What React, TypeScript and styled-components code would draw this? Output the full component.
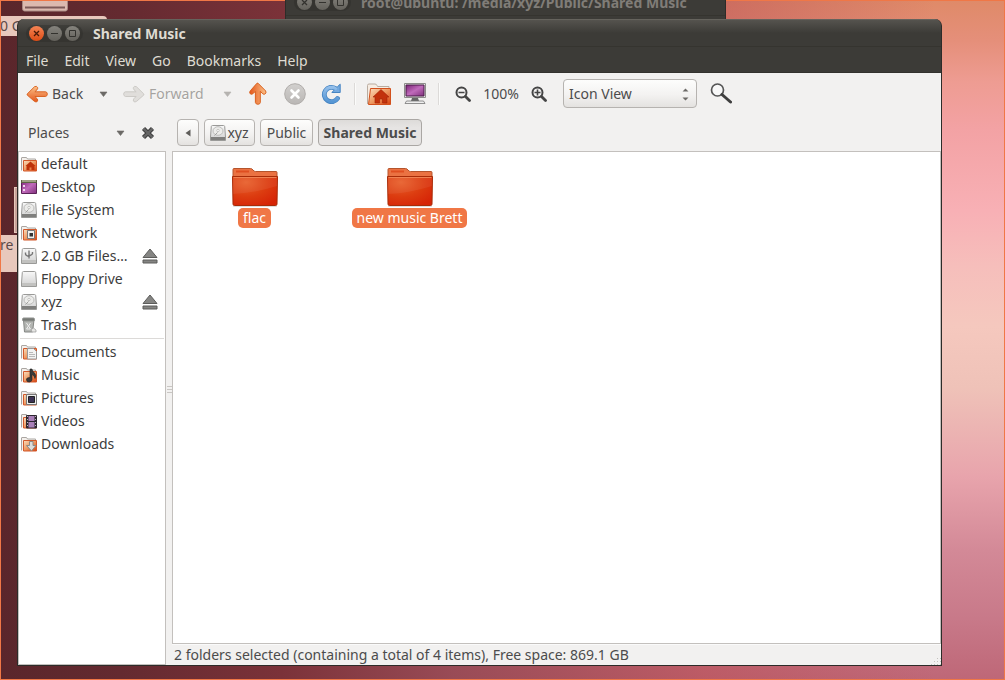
import React from "react";
import styled, { createGlobalStyle, css } from "styled-components";

const GlobalStyle = createGlobalStyle`
  *, *::before, *::after { box-sizing: border-box; }
  html, body, #root { height: 100%; margin: 0; }
  body {
    font-family: "Noto Sans", "Open Sans", sans-serif;
    font-size: 14px;
    line-height: 20px;
    color: #4c4c4c;
    overflow: hidden;
  }
  button, select { font: inherit; color: inherit; margin: 0; }
  svg { display: block; flex: none; }
`;

/* ---------- desktop ---------- */

const Desktop = styled.div`
  position: relative;
  height: 100vh;
  overflow: hidden;
  background:
    linear-gradient(90deg, #5a262b 0%, #642a30 12%, #7b3239 28%, rgba(146, 70, 80, 0.85) 45%, rgba(186, 80, 86, 0.55) 70%, rgba(200, 90, 90, 0) 93%),
    linear-gradient(180deg, #df8a68 0%, #e58f7a 6%, #ee9c92 12%, #f3a2a4 19%, #f8b0b5 31%, #f6bebb 39%, #f5c8be 48%, #efc2b8 57%, #e8a4ac 70%, #d38997 81%, #c87989 91%, #be6777 100%);
`;

const ScreenEdge = styled.div`
  position: absolute;
  inset: 0;
  border: 1px solid #f07746;
  pointer-events: none;
`;

const DesktopDrive = styled.div`
  position: absolute;
  left: 22px;
  top: 0;
`;

const DesktopLabel = styled.div<{ $top: number; $width: number; $height: number }>`
  position: absolute;
  left: 0;
  top: ${(p) => p.$top}px;
  width: ${(p) => p.$width}px;
  height: ${(p) => p.$height}px;
  border-radius: 0 4px 4px 0;
  background: #e8c8bc;
  color: #5c4a48;
  white-space: nowrap;
  overflow: hidden;
`;

const DesktopLauncher = styled.div`
  position: absolute;
  left: 14px;
  top: 187px;
  width: 8px;
  height: 46px;
  background: #c9a49b;
  border: 1px solid #e8c8bc;
`;

/* ---------- window chrome ---------- */

const windowBox = css`
  position: absolute;
  display: flex;
  flex-direction: column;
  border: 1px solid #2d2c29;
  border-top: 0;
  border-radius: 7px 7px 0 0;
  background: #3c3b37;
  overflow: hidden;
`;

const FileWindow = styled.main`
  ${windowBox}
  inset: 19px 63px 14px 17px;
`;

const TerminalWindow = styled.section`
  ${windowBox}
  left: 285px;
  top: -12px;
  width: 441px;
  height: 60px;
`;

const TitleBar = styled.header<{ $dim?: boolean }>`
  display: flex;
  align-items: center;
  flex: none;
  height: 28px;
  padding: 1px 8px 0;
  border-top: 1px solid #65635d;
  border-bottom: 1px solid #35342f;
  background: ${(p) => (p.$dim ? "#3c3b37" : "linear-gradient(#55534e, #3c3b37 50%)")};
  color: ${(p) => (p.$dim ? "#807d78" : "#dfdbd2")};
`;

const Controls = styled.div`
  display: flex;
  gap: 3px;
  padding: 1px 3px;
  border-radius: 9px;
  background: rgba(40, 39, 36, 0.35);
`;

const ControlButton = styled.button<{ $close?: boolean }>`
  display: grid;
  place-items: center;
  width: 15px;
  height: 15px;
  padding: 0;
  border: 0;
  border-radius: 50%;
  background: ${(p) => (p.$close ? "linear-gradient(#f58454, #de4c15)" : "linear-gradient(#85837d, #63615b)")};
  color: ${(p) => (p.$close ? "#4a1a08" : "#33322e")};
`;

const Title = styled.h1`
  margin: 0 0 0 10px;
  font-size: 14px;
  line-height: 20px;
  font-weight: 700;
  white-space: nowrap;
`;

const MenuBar = styled.nav`
  display: flex;
  align-items: center;
  flex: none;
  gap: 16px;
  height: 26px;
  padding: 2px 0 0 8px;
  border-bottom: 1px solid #33322e;
`;

const MenuItem = styled.button`
  padding: 0;
  border: 0;
  background: none;
  color: #dfdbd2;
`;

/* ---------- toolbar ---------- */

const Toolbar = styled.div`
  display: flex;
  align-items: center;
  flex: none;
  height: 41px;
  padding-left: 8px;
  background: #f2f1f0;
`;

const ToolButton = styled.button<{ $width: number; $align?: string }>`
  display: flex;
  align-items: center;
  justify-content: ${(p) => p.$align || "center"};
  flex: none;
  gap: 4px;
  width: ${(p) => p.$width}px;
  height: 30px;
  padding: 0;
  border: 0;
  background: none;
  white-space: nowrap;
  &:disabled { color: #a5a3a0; text-shadow: 0 1px 0 #fff; }
`;

const Gap = styled.span<{ $width: number }>`
  flex: none;
  width: ${(p) => p.$width}px;
`;

const Separator = styled.span`
  flex: none;
  width: 2px;
  height: 22px;
  margin: 0 5px;
  border-left: 1px solid #dcdad8;
  border-right: 1px solid #fbfbfa;
`;

const ZoomLevel = styled.output`
  flex: none;
  width: 52px;
  text-align: center;
`;

const SelectWrap = styled.label`
  position: relative;
  flex: none;
  width: 134px;
  margin: 0 8px 0 12px;
  svg { position: absolute; right: 7px; top: 9px; pointer-events: none; }
`;

const raised = css`
  border: 1px solid #b6b3b0;
  border-radius: 4px;
  background: linear-gradient(#fdfdfc, #f3f2f1 55%, #e4e2e0);
`;

const ViewSelect = styled.select`
  ${raised}
  display: block;
  appearance: none;
  width: 100%;
  height: 29px;
  padding: 0 5px;
`;

/* ---------- body ---------- */

const Body = styled.div`
  display: flex;
  flex: 1;
  min-height: 0;
  background: #f2f1f0;
`;

const Sidebar = styled.aside`
  display: flex;
  flex-direction: column;
  flex: none;
  width: 148px;
`;

const SidebarHeader = styled.div`
  display: flex;
  align-items: center;
  flex: none;
  height: 37px;
  padding: 0 8px 0 10px;
`;

const PlacesButton = styled.button`
  display: flex;
  align-items: center;
  justify-content: space-between;
  width: 97px;
  margin-right: 13px;
  padding: 0;
  border: 0;
  background: none;
`;

const CloseButton = styled.button`
  display: grid;
  place-items: center;
  width: 20px;
  height: 20px;
  padding: 0;
  border: 0;
  background: none;
`;

const PlacesList = styled.ul`
  flex: 1;
  margin: 0;
  padding: 0;
  list-style: none;
  border: 1px solid #c3c0bd;
  background: #fff;
`;

const Place = styled.li`
  display: flex;
  align-items: center;
  height: 23px;
  padding: 0 7px 0 2px;
`;

const PlaceLink = styled.a`
  display: flex;
  align-items: center;
  flex: 1;
  gap: 4px;
  color: #3c3c3c;
  text-decoration: none;
  white-space: nowrap;
`;

const EjectButton = styled.button`
  padding: 0;
  border: 0;
  background: none;
`;

const PlacesDivider = styled.li`
  height: 4px;
  padding: 2px 1px 1px;
  &::before { content: ""; display: block; height: 1px; background: #dcdad8; }
`;

const Handle = styled.div`
  display: grid;
  place-items: center;
  flex: none;
  width: 6px;
`;

const Content = styled.section`
  display: flex;
  flex-direction: column;
  flex: 1;
  min-width: 0;
`;

const PathBar = styled.nav`
  display: flex;
  align-items: center;
  flex: none;
  gap: 5px;
  height: 37px;
  padding-left: 5px;
`;

const PathButton = styled.button<{ $width: number; $active?: boolean }>`
  ${raised}
  display: flex;
  align-items: center;
  justify-content: center;
  flex: none;
  gap: 1px;
  width: ${(p) => p.$width}px;
  height: 27px;
  padding: 0;
  white-space: nowrap;
  ${(p) =>
    p.$active &&
    css`
      font-weight: 700;
      border-color: #aaa7a4;
      background: linear-gradient(#dddbd9, #e6e4e3 30%, #e6e4e3);
    `}
`;

const IconView = styled.div`
  display: grid;
  flex: 1;
  grid-template-columns: repeat(auto-fill, 155px);
  align-content: start;
  min-height: 0;
  padding: 15px 0 0 4px;
  border: 1px solid #c3c0bd;
  background: #fff;
`;

const FolderItem = styled.figure`
  display: flex;
  flex-direction: column;
  align-items: center;
  margin: 0;
`;

const FolderName = styled.figcaption`
  margin-top: 1px;
  padding: 0 5px;
  border-radius: 5px;
  background: #f07746;
  color: #fff;
  white-space: nowrap;
`;

const StatusBar = styled.footer`
  display: flex;
  align-items: center;
  justify-content: space-between;
  flex: none;
  height: 21px;
  padding-left: 2px;
  border-top: 1px solid #fafafa;
  white-space: nowrap;
`;

const Grip = styled.svg`
  align-self: flex-end;
`;

const Definitions = styled.svg`
  position: absolute;
`;

/* ---------- drawings ---------- */

const Gradients = () => (
  <Definitions width="0" height="0" aria-hidden="true">
    <defs>
      <linearGradient id="orange" x1="0" y1="0" x2="0" y2="1">
        <stop offset="0" stopColor="#fbc188" />
        <stop offset="1" stopColor="#e4571b" />
      </linearGradient>
      <linearGradient id="tan" x1="0" y1="0" x2="1" y2="1">
        <stop offset="0" stopColor="#fae0c0" />
        <stop offset="0.5" stopColor="#ee9a62" />
        <stop offset="1" stopColor="#d8410f" />
      </linearGradient>
      <linearGradient id="metal" x1="0" y1="0" x2="0" y2="1">
        <stop offset="0" stopColor="#f8f8f8" />
        <stop offset="1" stopColor="#d0d0d0" />
      </linearGradient>
      <linearGradient id="purple" x1="0" y1="0" x2="1" y2="1">
        <stop offset="0" stopColor="#7c2277" />
        <stop offset="0.5" stopColor="#c06bbb" />
        <stop offset="1" stopColor="#80307c" />
      </linearGradient>
      <linearGradient id="blue" x1="0" y1="0" x2="0" y2="1">
        <stop offset="0" stopColor="#93bee9" />
        <stop offset="1" stopColor="#5696d4" />
      </linearGradient>
      <linearGradient id="grey" x1="0" y1="0" x2="0" y2="1">
        <stop offset="0" stopColor="#d2d0ce" />
        <stop offset="1" stopColor="#b9b6b4" />
      </linearGradient>
      <radialGradient id="folderFront" cx="0.3" cy="0.2" r="0.9">
        <stop offset="0" stopColor="#e8602c" />
        <stop offset="0.55" stopColor="#dc3c10" />
        <stop offset="1" stopColor="#d62406" />
      </radialGradient>
    </defs>
  </Definitions>
);

const CloseGlyph = () => (
  <svg width="7" height="7" viewBox="0 0 7 7" stroke="currentColor" strokeWidth="1.3"><path d="M1 1l5 5M6 1L1 6" /></svg>
);
const MinGlyph = () => (
  <svg width="7" height="7" viewBox="0 0 7 7" stroke="currentColor"><path d="M0 3.5h7" /></svg>
);
const MaxGlyph = () => (
  <svg width="7" height="7" viewBox="0 0 7 7" fill="none" stroke="currentColor"><path d="M.5 .5h6v6h-6z" /></svg>
);

const Triangle = ({ color = "#6b6966" }: { color?: string }) => (
  <svg width="9" height="6" viewBox="0 0 9 6"><path d="M1 1h7L4.500 5.500z" fill={color} stroke={color} strokeWidth=".6" /></svg>
);

const arrowPath = "M1.200 9L9 1.300q2.200-1 3.200 1 .3 1.200-.8 2.400L9.300 6.700H20.500q1.800 .3 1.800 2.400t-1.800 2.500H9.300l2.200 2.200q1.200 1.400 .5 2.700-1.300 1.600-3.200 .2L1.200 10z";

const BackArrow = () => (
  <svg width="22" height="18" viewBox="0 0 23 18"><path d={arrowPath} fill="url(#orange)" stroke="#d9621f" /></svg>
);
const ForwardArrow = () => (
  <svg width="22" height="18" viewBox="0 0 23 18"><path transform="translate(23 0) scale(-1 1)" d={arrowPath} fill="#e0dedb" stroke="#cbc8c4" /></svg>
);
const UpArrow = () => (
  <svg width="18" height="23" viewBox="0 0 18 23">
    <path transform="translate(18 0) rotate(90)" d={arrowPath} fill="url(#orange)" stroke="#d9621f" />
  </svg>
);
const StopIcon = () => (
  <svg width="22" height="22" viewBox="0 0 22 22">
    <circle cx="11" cy="11" r="10.300" fill="url(#grey)" stroke="#b0adaa" />
    <path d="M7.500 7.500l7 7M14.500 7.500l-7 7" stroke="#fff" strokeWidth="2.600" strokeLinecap="round" />
  </svg>
);
const ReloadIcon = () => (
  <svg width="21" height="21" viewBox="0 0 21 21" fill="none">
    <path d="M16.500 15.500A7.200 7.200 0 1 1 14.500 5.500" stroke="#4584c2" strokeWidth="4.800" strokeLinecap="round" />
    <path d="M19.200 1.200v8.300h-8.300l2.600-2.800 3.200-3.200z" fill="#74a9de" stroke="#4584c2" strokeLinejoin="round" />
    <path d="M16.500 15.500A7.200 7.200 0 1 1 14.500 5.500" stroke="url(#blue)" strokeWidth="3.200" strokeLinecap="round" />
  </svg>
);
const HomeFolder = () => (
  <svg width="24" height="22" viewBox="0 0 24 22">
    <path d="M.5 21V2.500q0-1.500 1.500-1.500h6q1.500 0 2 1.500l.5 1h11.500V19" fill="#f6ece2" stroke="#b9aca0" />
    <path d="M3.500 5.500h20v16H1.500z" fill="url(#tan)" stroke="#d2501c" />
    <path d="M14 6.500l8 7.500h-2v6h-4.500v-4h-3v4H8v-6H6z" fill="#c2320c" stroke="#a32406" strokeWidth=".6" />
  </svg>
);
const ComputerIcon = () => (
  <svg width="22" height="23" viewBox="0 0 22 23">
    <path d="M.5 1.500h21v14H.5z" fill="#e4e4e2" stroke="#8d8d8a" />
    <path d="M2 3h18v11H2z" fill="url(#purple)" stroke="#4b1a48" />
    <path d="M8 16h6l1 3H7z" fill="#666" />
    <path d="M2.500 19h17l1.500 2.500H1z" fill="#eee" stroke="#777" strokeWidth=".8" />
  </svg>
);
const ZoomIcon = ({ plus }: { plus?: boolean }) => (
  <svg width="16" height="16" viewBox="0 0 16 16" fill="none" stroke="#454545">
    <circle cx="6.500" cy="6.500" r="5" strokeWidth="2" />
    <path d="M10.500 10.500l4 4" strokeWidth="2.800" strokeLinecap="round" />
    <path d={plus ? "M3.500 6.500h6M6.500 3.500v6" : "M3.500 6.500h6"} strokeWidth="1.600" />
  </svg>
);
const SearchIcon = () => (
  <svg width="22" height="21" viewBox="0 0 22 21" fill="none">
    <circle cx="7.500" cy="7" r="6" fill="#f8f8f8" stroke="#555" strokeWidth="1.700" />
    <path d="M12 11.500l8.500 7.500" stroke="#3e3e3e" strokeWidth="3" strokeLinecap="round" />
  </svg>
);
const Steppers = () => (
  <svg width="9" height="13" viewBox="0 0 9 13" fill="#6b6966"><path d="M1.500 3.500h6L4.500 .5zM1.500 9.500h6l-3 3z" /></svg>
);
const EjectIcon = () => (
  <svg width="16" height="16" viewBox="0 0 16 16" fill="#858583" stroke="#5d5d5b">
    <path d="M8 1L15 9.500H1zM1 12h14v3H1z" />
  </svg>
);
const CrossIcon = () => (
  <svg width="14" height="14" viewBox="0 0 14 14">
    <path d="M2.500 2.500l9 9M11.500 2.500l-9 9" stroke="#3f3f3f" strokeWidth="4.400" />
    <path d="M2.500 2.500l9 9M11.500 2.500l-9 9" stroke="#666" strokeWidth="2.400" />
  </svg>
);

const FolderIcon = () => (
  <svg width="48" height="40" viewBox="0 0 48 40">
    <path d="M3 38.500h42l1 1H2z" fill="#bbb" />
    <path d="M2 10V2.500q0-1 1-1h16.500q1.500 0 2.500 1.500 1 1.500 2.500 1.500H45q1 0 1 1V10z" fill="#ea7242" stroke="#b5542c" />
    <path d="M5 3.500h13v2H5z" fill="#df4e20" />
    <path d="M1.500 9.500h45L46 37q0 1.500-1.500 1.500h-41Q2 38.500 2 37z" fill="url(#folderFront)" stroke="#a82c08" />
    <path d="M2.500 10.500h43" stroke="#ee7a48" />
    <path d="M2 10h44v9Q24 26 2 27z" fill="#fff" opacity=".06" />
  </svg>
);

type IconKind =
  | "home" | "desktop" | "disk" | "network" | "usb" | "drive" | "trash"
  | "documents" | "music" | "pictures" | "videos" | "downloads";

const overlays: Partial<Record<IconKind, React.ReactNode>> = {
  home: <path d="M9.500 5.500l5 4.500h-1v4h-3v-2.500h-2V14h-3v-4h-1z" fill="#bd3109" />,
  network: (
    <>
      <path d="M6.500 5.500h7v8h-7z" fill="#f0f0ee" stroke="#777" />
      <path d="M8.500 8h3.500v3.500H8.500z" fill="#333" />
    </>
  ),
  documents: (
    <>
      <path d="M6.500 4.500h6l3 3v7.500h-9z" fill="#f3f3f2" stroke="#999" />
      <path d="M8 8.500h4M8 10.500h6M8 12.500h6" stroke="#aaa" strokeWidth=".8" />
    </>
  ),
  music: (
    <path d="M9 2l2 0q0 2.500 3 4.500 1.500 2 0 5-.5-3-3-4V12.500q0 2-2.500 2.500T5.500 13 9 10.500z" fill="#3a3a3a" stroke="#222" strokeWidth=".6" />
  ),
  pictures: (
    <>
      <path d="M5.500 4.500h10v10h-10z" fill="#eee" stroke="#777" />
      <path d="M7.500 6.500h6v6h-6z" fill="#3d3354" stroke="#222" />
    </>
  ),
  videos: (
    <>
      <path d="M5.500 2.500h10v12.500h-10z" fill="#a97fb8" stroke="#2d2630" />
      <path d="M6.500 3v12M14.500 3v12" stroke="#2d2630" strokeWidth="2" />
      <path d="M6.500 3v12M14.500 3v12" stroke="#bbb" strokeDasharray="1 2" />
      <path d="M7 8.500h7" stroke="#2d2630" />
    </>
  ),
  downloads: <path d="M8.500 5.500h3.500v4h3l-4.500 5.500L5.500 9.500h3z" fill="#dcdcda" stroke="#8a8a88" />,
};

const PlaceIcon = ({ kind }: { kind: IconKind }) => {
  let art: React.ReactNode;
  if (kind === "desktop") {
    art = (
      <>
        <path d="M.5 1.500h15v13H.5z" fill="url(#purple)" stroke="#5c2358" />
        <path d="M0 1h16v3H0z" fill="#5e6345" />
        <path d="M1 2h14" stroke="#dfe0c4" />
        <path d="M2 6h2v2H2zM2 10h2v2H2z" fill="#f0d8ee" />
      </>
    );
  } else if (kind === "disk" || kind === "usb" || kind === "drive") {
    art = (
      <>
        <path d="M2.500 .5h11q1 0 1.200 1l.8 10.500v3.500H.5V12l.8-10.500q.2-1 1.200-1z" fill="url(#metal)" stroke="#9a9a98" />
        <path d="M1 12h14v3H1z" fill={kind === "disk" ? "#7f7f7d" : "#c2c2c0"} />
        {kind === "disk" && (
          <>
            <ellipse cx="8" cy="6" rx="5" ry="4.300" fill="#ececea" stroke="#bcbcba" />
            <circle cx="8" cy="5.500" r="1.200" fill="#fff" stroke="#b0b0ae" strokeWidth=".7" />
            <path d="M4.500 10.500l3-3" stroke="#a0a09e" />
          </>
        )}
        {kind === "usb" && (
          <path d="M8 2.500v8M4.500 4.500v1.500q0 1.500 3.500 2.500M11.500 4v1.500q0 1-3.500 2.500" fill="none" stroke="#777" strokeWidth="1.400" />
        )}
      </>
    );
  } else if (kind === "trash") {
    art = (
      <>
        <path d="M2.500 3l1 12h8l1.500-12z" fill="#b4b6b3" stroke="#848683" />
        <path d="M2.500 1h10q1 0 1 1.500t-1 1.500h-10q-1 0-1-1.500t1-1.500z" fill="#777a76" stroke="#8f918e" />
        <path d="M5.500 6l2 3 2-3M5.500 12h4l-2-3z" fill="none" stroke="#eee" />
        <path d="M10 12.500l2.500-1.500 2.500 2v2h-4z" fill="#e6e6e4" stroke="#999" strokeWidth=".7" />
      </>
    );
  } else {
    art = (
      <>
        <path d="M.5 14.500V2q0-.5 .5-.5h4.500l1 1.500h8V5" fill="#f4f0ec" stroke="#aaa6a2" />
        <path d="M2.500 4.500h13v10.500h-13z" fill="url(#tan)" stroke="#d2582a" />
        {overlays[kind]}
      </>
    );
  }
  return <svg width="16" height="16" viewBox="0 0 16 16" aria-hidden="true">{art}</svg>;
};

/* ---------- data ---------- */

interface PlaceEntry {
  name: string;
  icon: IconKind;
  eject?: boolean;
}

const menus = ["File", "Edit", "View", "Go", "Bookmarks", "Help"];

const devices: PlaceEntry[] = [
  { name: "default", icon: "home" },
  { name: "Desktop", icon: "desktop" },
  { name: "File System", icon: "disk" },
  { name: "Network", icon: "network" },
  { name: "2.0 GB Files…", icon: "usb", eject: true },
  { name: "Floppy Drive", icon: "drive" },
  { name: "xyz", icon: "disk", eject: true },
  { name: "Trash", icon: "trash" },
];

const bookmarks: PlaceEntry[] = [
  { name: "Documents", icon: "documents" },
  { name: "Music", icon: "music" },
  { name: "Pictures", icon: "pictures" },
  { name: "Videos", icon: "videos" },
  { name: "Downloads", icon: "downloads" },
];

const folders = ["flac", "new music Brett"];

const renderPlace = (p: PlaceEntry) => (
  <Place key={p.name}>
    <PlaceLink href="#">
      <PlaceIcon kind={p.icon} />
      {p.name}
    </PlaceLink>
    {p.eject && <EjectButton aria-label={`Eject ${p.name}`}><EjectIcon /></EjectButton>}
  </Place>
);

const WindowControls = ({ dim }: { dim?: boolean }) => (
  <Controls>
    <ControlButton $close={!dim} aria-label="Close"><CloseGlyph /></ControlButton>
    <ControlButton aria-label="Minimize"><MinGlyph /></ControlButton>
    <ControlButton aria-label="Maximize"><MaxGlyph /></ControlButton>
  </Controls>
);

export default function App() {
  return (
    <Desktop>
      <GlobalStyle />
      <Gradients />
      <DesktopDrive>
        <svg width="46" height="12" viewBox="0 0 46 12">
          <path d="M.5 0h45v8.500q0 2.500-2 2.500h-41q-2 0-2-2.500z" fill="#dcb9ae" stroke="#a98a84" />
          <path d="M3 6.500h40v2H3z" fill="#7d5a58" />
        </svg>
      </DesktopDrive>
      <DesktopLabel $top={16} $width={107} $height={20}>0 G</DesktopLabel>
      <DesktopLauncher />
      <DesktopLabel $top={235} $width={40} $height={37}>re l</DesktopLabel>
      <ScreenEdge />

      <TerminalWindow>
        <TitleBar $dim>
          <WindowControls dim />
          <Title as="h2">root@ubuntu: /media/xyz/Public/Shared Music</Title>
        </TitleBar>
      </TerminalWindow>

      <FileWindow>
        <TitleBar>
          <WindowControls />
          <Title>Shared Music</Title>
        </TitleBar>
        <MenuBar>
          {menus.map((m) => <MenuItem key={m}>{m}</MenuItem>)}
        </MenuBar>

        <Toolbar>
          <ToolButton $width={65} $align="flex-start"><BackArrow />Back</ToolButton>
          <ToolButton $width={24} aria-label="Back history"><Triangle /></ToolButton>
          <Gap $width={8} />
          <ToolButton $width={92} $align="flex-start" disabled><ForwardArrow />Forward</ToolButton>
          <ToolButton $width={24} aria-label="Forward history" disabled><Triangle color="#b5b3b0" /></ToolButton>
          <ToolButton $width={38} aria-label="Up"><UpArrow /></ToolButton>
          <ToolButton $width={36} aria-label="Stop" disabled><StopIcon /></ToolButton>
          <ToolButton $width={36} aria-label="Reload"><ReloadIcon /></ToolButton>
          <Separator />
          <ToolButton $width={36} aria-label="Home"><HomeFolder /></ToolButton>
          <ToolButton $width={36} aria-label="Computer"><ComputerIcon /></ToolButton>
          <Separator />
          <Gap $width={6} />
          <ToolButton $width={24} aria-label="Zoom out"><ZoomIcon /></ToolButton>
          <ZoomLevel>100%</ZoomLevel>
          <ToolButton $width={24} aria-label="Zoom in"><ZoomIcon plus /></ToolButton>
          <SelectWrap>
            <ViewSelect aria-label="View mode" defaultValue="Icon View">
              <option>Icon View</option>
            </ViewSelect>
            <Steppers />
          </SelectWrap>
          <ToolButton $width={32} aria-label="Search"><SearchIcon /></ToolButton>
        </Toolbar>

        <Body>
          <Sidebar>
            <SidebarHeader>
              <PlacesButton>Places<Triangle /></PlacesButton>
              <CloseButton aria-label="Close side pane"><CrossIcon /></CloseButton>
            </SidebarHeader>
            <PlacesList>
              {devices.map(renderPlace)}
              <PlacesDivider aria-hidden="true" />
              {bookmarks.map(renderPlace)}
            </PlacesList>
          </Sidebar>
          <Handle>
            <svg width="5" height="8" viewBox="0 0 5 8" stroke="#c9c6c3"><path d="M0 .5h5M0 3.500h5M0 6.500h5" /></svg>
          </Handle>
          <Content>
            <PathBar>
              <PathButton $width={22} aria-label="Scroll path left">
                <svg width="6" height="8" viewBox="0 0 6 8"><path d="M5.500 .5v7L.5 4z" fill="#5f5d5a" /></svg>
              </PathButton>
              <PathButton $width={51}><PlaceIcon kind="disk" />xyz</PathButton>
              <PathButton $width={53}>Public</PathButton>
              <PathButton $width={104} $active>Shared Music</PathButton>
            </PathBar>
            <IconView>
              {folders.map((f) => (
                <FolderItem key={f}>
                  <FolderIcon />
                  <FolderName>{f}</FolderName>
                </FolderItem>
              ))}
            </IconView>
            <StatusBar>
              2 folders selected (containing a total of 4 items), Free space: 869.1 GB
              <Grip width="11" height="11" viewBox="0 0 11 11" stroke="#c4c1be" strokeDasharray="1 2">
                <path d="M1 10.500h10M4 7.500h7M7 4.500h4" />
              </Grip>
            </StatusBar>
          </Content>
        </Body>
      </FileWindow>
    </Desktop>
  );
}
